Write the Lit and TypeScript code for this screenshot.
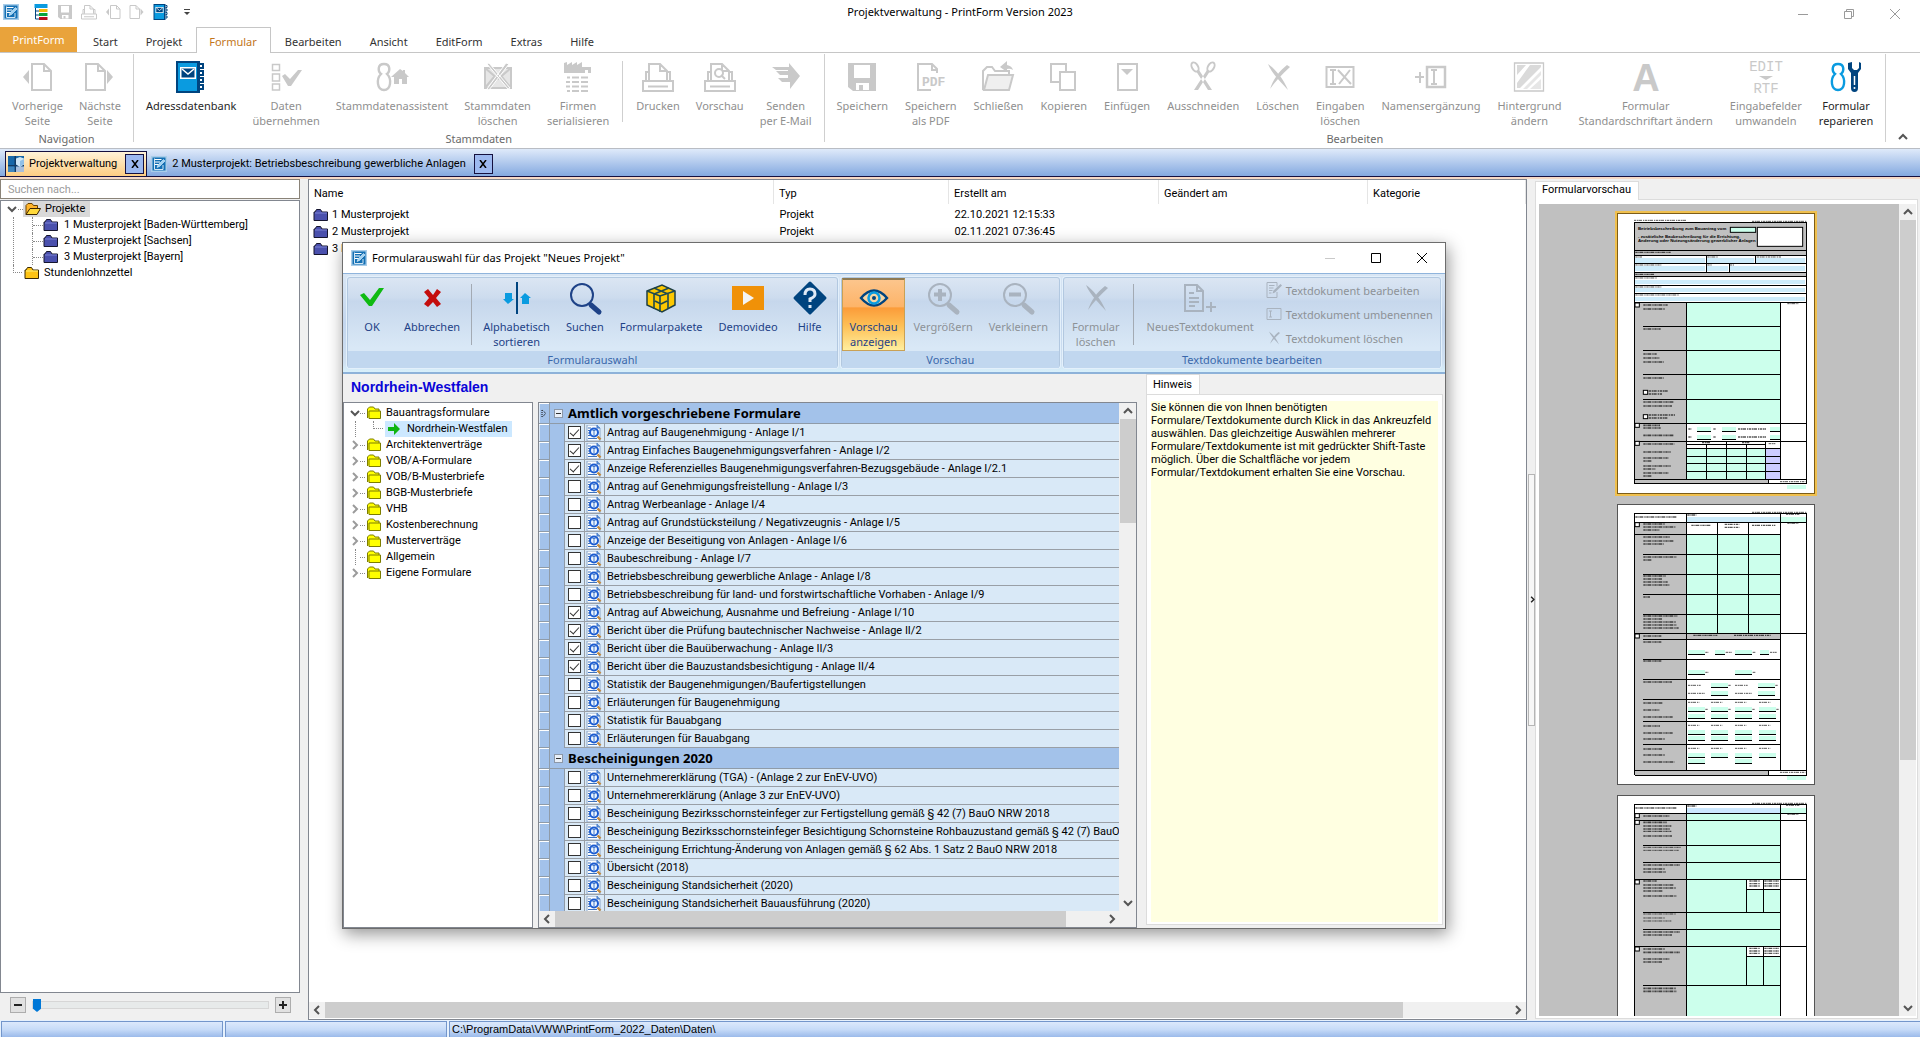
import { LitElement, html, svg, css, nothing } from "lit";
import { customElement, state } from "lit/decorators.js";
import { classMap } from "lit/directives/class-map.js";

/* ---------- icons: 32 unit ribbon glyphs ---------- */
const G = "#c9c9c9";
const page = (x: number) => svg`<path d="M${x} 3h12l7 7v19h-19zM${x + 12} 3v7h7" fill="none" stroke="currentColor" stroke-width="2"/>`;
const cross = svg`<path d="M6 3c7 5 15 14 20 26C20 22 10 13 6 3zM25 4l3 2C20 13 13 21 8 28c3-9 9-18 17-24z" fill="currentColor"/>`;
const man = (x: number, c: string) => svg`<path d="M${x} 3c-7 0-6 8-3 10c-5 5-4 16 3 16s8-11 3-16c3-2 4-10-3-10z" fill="none" stroke="${c}" stroke-width="2.4"/>`;
const loupe = (inner: unknown) => svg`<circle cx="13" cy="13" r="11" fill="none" stroke="currentColor" stroke-width="2"/>${inner}<path d="M22 23l8 7" stroke="currentColor" stroke-width="5" stroke-linecap="round"/>`;
const printer = svg`<path d="M1 20h30v10h-30zM6 25.500h20M4 20v-9h3v8M28 20v-9h-3v8M7 19v-16h11l7 7v9M18 3v7h7" fill="none" stroke="currentColor" stroke-width="2"/>`;
const book = svg`<path d="M1 0h24v32h-24z" fill="#00447f"/><path d="M3 2h19v28h-19z" fill="#0a9be0"/><path d="M5 6h16v12h-16z" fill="#fff"/><path d="M6.500 7.500h13v9h-13z" fill="#00447f"/><path d="M7 8l6 5 6-5" fill="none" stroke="#fff" stroke-width="1.500"/><path d="M25 3h3v4h-3M25 10h3v4h-3M25 17h3v4h-3M25 24h3v4h-3" fill="none" stroke="#00447f" stroke-width="2"/>`;
const docIcon = svg`<path d="M0 0h32v32H0z" fill="#1470b4"/><path d="M1.500 1.500h29v29h-29z" fill="none" stroke="#a9cde9" stroke-width="3"/><path d="M8 7h13M8 12h10M8 17h7" stroke="#fff" stroke-width="2"/><path d="M7 5v22h17v-9" fill="none" stroke="#d4e7f5" stroke-width="2"/><path d="M12 23l2-5L25 7l3 3-11 11z" fill="#9fd3f5" stroke="#fff"/>`;

const ICONS: Record<string, unknown> = {
  prev: svg`<path d="M8 9v14l-6-7z" fill="currentColor"/>${page(11)}`,
  next: svg`<path d="M23 9v14l6-7z" fill="currentColor"/>${page(2)}`,
  book, doc: docIcon, printer,
  daten: svg`<path d="M2.500 3.500h7v6h-7zM2.500 13h7v7h-7zM2.500 23h7v6h-7z" fill="none" stroke="currentColor" stroke-width="1.500"/><path d="M12 15l3-2 5 5 8-9h4L21 25h-3z" fill="currentColor"/>`,
  assist: svg`${man(8, G)}<path d="M15 16l9-8 3 2v-1h2v3l4 4h-2v7h-5v-5h-3v5h-5v-7z" fill="currentColor"/>`,
  stammdel: svg`<path d="M3 7h26v20h-26z" fill="#e6e6e6" stroke="currentColor" stroke-width="2"/><path d="M3 7l13 11L29 7M3 27l9-11M29 27l-9-11" fill="none" stroke="currentColor" stroke-width="2"/><path d="M5 3l2-1 21 25-2 1zM24 2l3 1L7 29l-2-1z" fill="${G}" stroke="#fff"/>`,
  firmen: svg`<path d="M2 12V2l3-1v3l5-3v3l5-3v3l5-3v5h9v6h-3v-3h-3v3z" fill="currentColor"/><path d="M5 16.500h3M10 16.500h7M19 16.500h7M4 21h4M10 21h7M19 21h7M4 25.500h4M10 25.500h7M19 25.500h7M5 30h3M10 30h7M19 30h7" stroke="currentColor" stroke-width="2"/>`,
  preview: svg`${printer}<circle cx="15" cy="12" r="4" fill="#fff" stroke="currentColor" stroke-width="2"/><path d="M17 14l4 4" stroke="currentColor" stroke-width="2"/>`,
  send: svg`<path d="M2 6h17V2l11 13-10 13v-7h-8l-4-4h10v-3h-8l-4-4h12v-1H6z" fill="currentColor"/>`,
  save: svg`<path d="M2 2h28v28H7l-5-4z" fill="currentColor"/><path d="M8 4h16v13H8z" fill="#fff"/><path d="M10 22h13v7H10z" fill="#fff"/><path d="M13 24h4v5h-4z" fill="currentColor"/>`,
  pdf: svg`<path d="M22 9v-1l-5-5H3v26h13M17 3v6h5v3" fill="none" stroke="currentColor" stroke-width="2"/><text x="7" y="25" font-family="Liberation Mono" font-weight="700" font-size="13" fill="currentColor">PDF</text>`,
  close: svg`<path d="M1 29V10l4-4h5l3 4h14v4" fill="none" stroke="currentColor" stroke-width="2"/><path d="M6 14h25l-4 15H2z" fill="#efefef" stroke="currentColor" stroke-width="2"/><path d="M18 6l7-6v4q5 1 6 5-3-2-6-1v3z" fill="currentColor"/>`,
  copy: svg`<path d="M3 3h15v18H3z" fill="none" stroke="currentColor" stroke-width="2"/><path d="M12 11h15v18H12z" fill="#fff" stroke="currentColor" stroke-width="2"/>`,
  paste: svg`<path d="M7 3h19v26H7z" fill="none" stroke="currentColor" stroke-width="2"/><path d="M10 8h12l-6 6z" fill="currentColor"/>`,
  cut: svg`<ellipse cx="8" cy="6" rx="3" ry="5" transform="rotate(-30 8 6)" fill="none" stroke="currentColor" stroke-width="2"/><ellipse cx="24" cy="6" rx="3" ry="5" transform="rotate(30 24 6)" fill="none" stroke="currentColor" stroke-width="2"/><path d="M9 10l3-1 13 20h-4zM23 10l-3-1L7 29h4z" fill="currentColor"/>`,
  cross,
  eingaben: svg`<path d="M2.500 6h27v20h-27z" fill="none" stroke="currentColor" stroke-width="2"/><path d="M6 9h6M9 9v14M6 23h6" stroke="currentColor" stroke-width="2"/><path d="M14 9l13 14M26 9L15 23" stroke="currentColor" stroke-width="2"/>`,
  namen: svg`<path d="M0 16h9M5 11v11" stroke="currentColor" stroke-width="2"/><path d="M12 6h18v20H12z" fill="none" stroke="currentColor" stroke-width="2.500"/><path d="M16 9h6M19 9v14M16 23h6" stroke="currentColor" stroke-width="2"/>`,
  hinter: svg`<path d="M1.500 2h29v28h-29z" fill="none" stroke="currentColor" stroke-width="1.300"/><path d="M4 4h9L4 14zM17 4h11v2L7 27H4v-5z" fill="#dadada"/><path d="M28 10v4L14 28h-4zM28 18v10h-11z" fill="#e6e6e6"/>`,
  fontA: svg`<text x="16" y="30" text-anchor="middle" font-family="Liberation Sans" font-weight="700" font-size="38" fill="currentColor">A</text>`,
  editrtf: svg`<text x="16" y="10" text-anchor="middle" font-family="Liberation Mono" font-size="14" fill="currentColor">EDIT</text><path d="M9 15h14l-7 4z" fill="currentColor"/><text x="16" y="32" text-anchor="middle" font-family="Liberation Mono" font-size="14" fill="currentColor">RTF</text>`,
  repair: svg`${man(8, "#0a9be0")}<path d="M18 2v6l3 4v15q0 4 3.500 4t3.500-4V12l3-4V2l-2-1v6l-2 2h-3l-2-2V1z" fill="#00447f"/><path d="M24.500 15v9" stroke="#fff" stroke-width="1.500"/><circle cx="24.500" cy="27" r="1" fill="#fff"/>`,
  ok: svg`<path d="M4 13l4-2 6 7 9-12h5L16 24h-3z" fill="#0fba12"/>`,
  cancel: svg`<path d="M8 10l4-3 5 6 4-6 4 3-5 6 5 6-4 3-4-5-5 5-4-3 5-6z" fill="#c40d0d"/>`,
  sort: svg`<path d="M16 0v32" stroke="#00447f" stroke-width="2"/><path d="M4 11h7v6h2l-6 5-5-5h2z" fill="#0a9be0"/><path d="M21 22h7v-6h2l-6-5-5 5h2z" fill="#0a9be0"/>`,
  search: loupe(nothing),
  zoomin: loupe(svg`<path d="M7 12.500h12M13 7v12" stroke="currentColor" stroke-width="4"/>`),
  zoomout: loupe(svg`<path d="M7 12.500h12" stroke="currentColor" stroke-width="4"/>`),
  box: svg`<path d="M2 9l15-6 13 6v14l-13 7-15-7z" fill="#fdc800" stroke="#1f3f44" stroke-width="1.500"/><path d="M2 9l13 5 15-5M15 14v16M9 6l14 6v15M24 6l-15 6v15M10 19l6 3M22 19l-6 3" fill="none" stroke="#1f4a50" stroke-width="1.600"/>`,
  video: svg`<path d="M0 4h32v24H0z" fill="#f09108"/><path d="M11 9l11 7-11 7z" fill="#f4f4f4"/>`,
  help: svg`<path d="M16 1L31 16 16 31 1 16z" fill="#00447f" stroke="#00447f" stroke-width="3" stroke-linejoin="round"/><path d="M11 13q0-6 5-6t5 5q0 3-5 5v3" fill="none" stroke="#dfe9f5" stroke-width="3"/><path d="M14.500 23h3v3h-3z" fill="#dfe9f5"/>`,
  eye: svg`<path d="M3 16q13-15 26 0q-13 15-26 0z" fill="#f7d6a5" stroke="#00447f" stroke-width="2.400"/><circle cx="16" cy="16" r="5.500" fill="none" stroke="#0a9be0" stroke-width="2.500"/><circle cx="16" cy="16" r="2" fill="#00447f"/>`,
  neudoc: svg`<path d="M1 3h12l6 6v20H1zM13 3v6h6M5 11h5M5 16h10M5 20h10M5 24h6" fill="none" stroke="currentColor" stroke-width="2"/><path d="M22 25h10M27 20v10" stroke="currentColor" stroke-width="2"/>`,
  tedit: svg`<path d="M2 1h20v8M22 20v11H2V1M6 7h11M6 12h9M6 17h7M6 22h5" fill="none" stroke="currentColor" stroke-width="2"/><path d="M13 23l2-6L29 4l3 3-14 14z" fill="currentColor"/>`,
  trename: svg`<path d="M2 5h28v22H2z" fill="none" stroke="currentColor" stroke-width="2"/><path d="M6 10h6M9 10v12M6 22h6" stroke="currentColor" stroke-width="2"/>`,
  list: svg`<path d="M3 0h26v8H3z" fill="#0a9be0"/><path d="M5 8v22M5 14h8M5 22h8M5 30h8" stroke="#00447f" stroke-width="2" fill="none"/><path d="M12 10h17v6H12z" fill="#f2b90c"/><path d="M12 18h17v6H12z" fill="#0aa43c"/><path d="M12 26h17v6H12z" fill="#b80f1c"/>`,
  projekt: svg`<path d="M0 0h32v32H0z" fill="#1767a8"/><path d="M13 0h3v32h-3zM0 18h32v3H0z" fill="#123a63"/><path d="M0 21h13v11H0z" fill="#3e86bf"/><path d="M16 21h16v11H16z" fill="#a9bfdc"/><path d="M16 5l8-3 8 3v12l-8 5-8-5z" fill="#cfe6f6"/><path d="M24 10l8-4v10l-8 5z" fill="#8fbfe6"/>`,
};
const icon = (n: string, cls = "i32") => html`<svg class=${cls} viewBox="0 0 32 32" aria-hidden="true">${ICONS[n]}</svg>`;

const FOLDERS: Record<string, [string, string, string]> = {
  blue: ["#4a50ad", "#7c83d6", "#15152e"],
  yellow: ["#ffc414", "#fff27a", "#3b2a05"],
  lemon: ["#ffff00", "#ffff00", "#7d7d00"],
};
const folder = (k: string) => {
  const [a, b, s] = FOLDERS[k];
  return html`<svg class="fold" viewBox="0 0 16 14" aria-hidden="true">${k === "lemon"
    ? svg`<path d="M1.500 12V3l2-2h4l1.500 2h4v2M3 12.500V5h11.500v7.500z" fill="${a}" stroke="${s}"/>`
    : svg`<path d="M1 12.500V4h1l1.500-2.500h4L9 4h5.500v8.500z" fill="${a}" stroke="${s}"/><path d="M2 5h12" stroke="${b}"/>`}</svg>`;
};
const openFolder = html`<svg class="fold" viewBox="0 0 16 14" aria-hidden="true"><path d="M1 12.500V3.500L3 1.500h4L8.500 3.500h4V6" fill="#ffb52b" stroke="#6b4300"/><path d="M1 12.500L5 6.500h10.500l-3.500 6z" fill="#ffd93b" stroke="#3b2500"/></svg>`;
const CHEV: Record<string, string> = { d: "M1 3l4 4 4-4", u: "M1 7l4-4 4 4", l: "M7 1L3 5l4 4", r: "M3 1l4 4-4 4" };
const chev = (d: string, cls = "chev") => html`<svg class=${cls} viewBox="0 0 10 10" aria-hidden="true"><path d=${CHEV[d]} fill="none" stroke="currentColor" stroke-width="2"/></svg>`;
const rowMark = html`<svg class="mark" viewBox="0 0 6 9" aria-hidden="true"><path d="M1 1v7l4-3.500z" fill="#a3c2ea" stroke="#111" stroke-dasharray="1 1"/></svg>`;
const magnifier = html`<svg class="mag" viewBox="0 0 16 16" aria-hidden="true"><path d="M1 0h10l3 3v13H1z" fill="#fbfdff" stroke="#8ba6c8"/><path d="M11 0v3h3" fill="#6b9be0" stroke="#3f74c4"/><path d="M2 3h3M2 5.500h2M2 8h2M2 10.500h2M2 13.500h9" stroke="#3e72bd"/><circle cx="8" cy="7.500" r="4" fill="#eaf4ff" stroke="#1c5cd0" stroke-width="2"/><path d="M8 5v5M6.500 5.500h3" stroke="#4579c8"/><path d="M11.500 11.500l3 3" stroke="#c48a3c" stroke-width="2.400"/></svg>`;

/* ---------- preview page drawing ---------- */
const MINT = "#ccffec", SKY = "#cdecfb", GREY = "#c0c0c0";
const R = (x: number, y: number, w: number, h: number, f: string) => svg`<rect x=${x} y=${y} width=${w} height=${h} fill=${f} shape-rendering="crispEdges"/>`;
const H = (a: number, b: number, ...ys: number[]) => ys.map(y => svg`<path d="M${a} ${y}H${b}" stroke="#000" stroke-width="3" shape-rendering="crispEdges"/>`);
const V = (a: number, b: number, ...xs: number[]) => xs.map(x => svg`<path d="M${x} ${a}V${b}" stroke="#000" stroke-width="3" shape-rendering="crispEdges"/>`);
const D = (x: number, y: number, w: number, k = 5) => svg`<path d="M${x} ${y}h${w}" stroke="#000" stroke-opacity=".66" stroke-width=${k} stroke-dasharray="7 2 4 1 10 3 4 2"/>`;
const Ds = (x: number, k: number, ...l: [number, number][]) => l.map(([y, w]) => D(x, y, w, k));
const Box = (x: number, y: number) => svg`<rect x=${x} y=${y} width="13" height="12" fill="#fff" stroke="#000" stroke-width="3"/>`;
const Field = (x: number, y: number, w: number) => [R(x, y, w, 13, MINT), H(x, x + w, y + 14)];
const T = (x: number, y: number, s: string) => svg`<text x=${x} y=${y} font-family="Liberation Sans" font-weight="700" font-size="13">${s}</text>`;

const PAGE1 = svg`<g transform="translate(-37 -43) scale(.33333)">
 ${R(164, 157, 516, 98, GREY)}${R(164, 308, 516, 12, GREY)}${R(164, 398, 156, 545, GREY)}${R(164, 928, 400, 14, GREY)}
 ${D(162, 151, 156, 3)}${D(516, 154, 164, 3)}
 ${T(174, 180, "Betriebsbeschreibung zum Bauantrag vom")}
 ${T(174, 204, "- zusätzliche Baubeschreibung für die Errichtung,")}
 ${T(174, 217, "Änderung oder Nutzungsänderung gewerblicher Anlagen")}
 <rect x="451" y="172" width="76" height="15" fill=${MINT} stroke="#000" stroke-width="3"/><rect x="532" y="172" width="136" height="57" fill="#fff" stroke="#000" stroke-width="3"/>
 ${D(166, 247, 108, 4)}${D(166, 313, 56, 4)}
 ${[[166, 208], [382, 140], [528, 148]].map(([x, w]) => R(x, 264, w, 14, SKY))}
 ${[[166, 208], [382, 62], [450, 226]].map(([x, w]) => R(x, 288, w, 14, SKY))}
 ${[330, 354, 380].map(y => R(166, y, 510, 13, SKY))}
 ${D(166, 261, 20, 3)}${D(382, 261, 32, 3)}${D(530, 261, 74, 3)}${D(166, 285, 78, 3)}${D(382, 285, 14, 3)}${D(450, 285, 12, 3)}
 ${D(166, 324, 66, 3)}${D(166, 351, 78, 3)}${D(166, 375, 130, 3)}
 ${H(164, 680, 157, 242, 256, 280, 308, 320, 346, 371, 398)}
 ${V(256, 280, 380, 527)}${V(280, 308, 380, 448)}
 ${R(320, 398, 281, 362, MINT)}${H(189, 601, 469, 541, 613, 688)}${H(164, 601, 760)}
 ${H(164, 680, 760, 814)}
 ${Ds(190, 5, [405, 74], [417, 66], [477, 52], [552, 42], [564, 48], [576, 62], [624, 62], [696, 92], [708, 86], [766, 50], [774, 52], [796, 92], [822, 94], [846, 82], [864, 76], [873, 26], [888, 82], [897, 36], [909, 76], [918, 26])}
 ${Box(190, 661)}${Box(190, 734)}${Ds(206, 5, [663, 60], [672, 40], [735, 80], [744, 56])}
 ${Box(165, 399)}${Box(165, 760)}${Box(165, 814)}${D(622, 401, 34, 3)}
 ${[770, 794].map(y => [D(325, y + 7, 10, 4), Field(351, y, 42), D(400, y + 7, 8, 4), Field(426, y, 42), D(474, y + 7, 84, 4), Field(570, y, 30)])}
 ${R(320, 835, 237, 92, MINT)}${R(557, 835, 44, 92, "#ccccff")}
 ${D(366, 818, 24, 4)}${D(486, 818, 22, 4)}${D(566, 821, 20, 3)}
 ${H(320, 557, 823)}${H(320, 601, 835, 859, 880, 904)}${V(823, 928, 380, 500)}${V(814, 928, 440, 557)}
 ${H(164, 680, 928, 942)}${R(566, 931, 112, 9, "#fff")}${V(928, 942, 565)}${D(600, 935, 76, 3)}${R(621, 946, 57, 11, MINT)}
 ${V(157, 943, 164, 680)}${V(398, 928, 320, 601)}</g>`;

const PAGE2 = svg`<g transform="translate(-37 -14) scale(.33333)">
 ${D(516, 67, 164, 3)}${R(164, 97, 156, 744, GREY)}${R(320, 431, 281, 16, GREY)}${R(321, 81, 280, 14, SKY)}${R(603, 81, 74, 14, MINT)}${R(164, 843, 400, 13, GREY)}
 ${D(166, 81, 126, 5)}${D(322, 75, 28, 5)}${D(618, 73, 42, 3)}${D(622, 100, 34, 3)}
 ${R(320, 133, 281, 297, MINT)}
 ${H(164, 680, 70, 97, 430)}${H(164, 601, 133)}${H(189, 601, 193, 253, 313, 373)}${V(97, 430, 413, 506)}
 ${D(334, 106, 58, 4)}${D(434, 103, 44, 4)}${D(434, 112, 44, 4)}${D(516, 106, 70, 4)}
 ${Ds(190, 5, [102, 66], [111, 96], [120, 48], [141, 80], [153, 90], [162, 62], [201, 100], [210, 26], [258, 68], [321, 20], [378, 102], [387, 56], [438, 54], [456, 54], [513, 54], [576, 86], [639, 60], [660, 48], [681, 88], [708, 50], [729, 88], [747, 64], [777, 56], [795, 64], [816, 94])}
 ${Ds(190, 4, [267, 56], [276, 74], [285, 78], [396, 98], [405, 100], [414, 108])}
 ${D(340, 436, 72, 4)}${D(462, 436, 110, 4)}
 ${H(189, 601, 448, 508, 568, 628, 694, 763)}
 ${Field(324, 481, 51)}${Field(405, 481, 30)}${Field(465, 481, 51)}${Field(540, 481, 27)}${Field(324, 541, 51)}${Field(465, 541, 51)}
 ${D(376, 487, 10, 3)}${D(437, 487, 18, 3)}${D(518, 487, 10, 3)}${D(570, 487, 20, 3)}${D(376, 547, 10, 3)}${D(518, 547, 10, 3)}
 ${[324, 465].map(x => [D(x, 586, 38, 3), D(x, 610, 50, 3), Field(x + 70, 579, 51), Field(x + 70, 603, 51), D(x + 121, 586, 8, 3)])}
 ${[324, 393, 465, 537].map(x => [[637, 706, 775].map(y => D(x, y, 34, 3)), [652, 671, 721, 739].map(y => Field(x, y, 51)), Field(x, 788, 51), D(x + 52, 658, 8, 3)])}
 ${Field(324, 808, 51)}${Field(465, 808, 51)}
 ${Box(165, 98)}${Box(165, 432)}
 ${H(164, 680, 841, 856)}${R(566, 844, 112, 10, "#fff")}${V(843, 856, 565)}${D(600, 847, 76, 3)}${R(621, 858, 57, 11, MINT)}
 ${V(70, 856, 164, 680)}${V(70, 841, 320, 601)}</g>`;

const PAGE3 = svg`<g transform="translate(-117 -15) scale(.33333)">
 ${D(756, 70, 164, 3)}${R(404, 100, 156, 760, GREY)}${R(561, 84, 280, 15, "#cce8ff")}${R(844, 84, 74, 14, MINT)}${R(560, 101, 281, 760, MINT)}
 ${D(406, 84, 126, 5)}${D(562, 78, 28, 5)}${D(858, 76, 42, 3)}${D(862, 103, 34, 3)}
 ${H(404, 920, 73, 100, 121, 298, 499)}${H(429, 841, 196, 247, 397, 448, 616)}
 ${R(741, 300, 99, 27, "#fff")}${R(741, 501, 99, 27, "#fff")}${V(298, 397, 740, 790)}${V(499, 616, 740, 790)}${H(740, 841, 328, 529)}
 ${[303, 505].map(y => [0, 8, 15].map(k => [D(748, y + k, 32, 4), D(793, y + k, 44, 4)]))}
 ${Ds(430, 5, [108, 78], [127, 70], [168, 86], [255, 110], [267, 64], [276, 68], [303, 40], [348, 100], [456, 110], [465, 86], [507, 64], [517, 110], [537, 78], [546, 56], [625, 98], [634, 100])}
 ${Ds(430, 4, [138, 84], [147, 80], [154, 84], [315, 92], [324, 98], [333, 60])}
 ${Ds(430, 3, [202, 112], [211, 106], [402, 98], [414, 66], [423, 84])}
 ${Box(405, 101)}${Box(405, 121)}${Box(405, 300)}${Box(405, 501)}
 ${V(73, 860, 404, 920)}${V(73, 860, 560, 841)}</g>`;

/* ---------- data ---------- */
type Btn = [string, string, boolean?];
const NAV: Btn[] = [["prev", "Vorherige\nSeite"], ["next", "Nächste\nSeite"]];
const STAMM: Btn[] = [["book", "Adressdatenbank", true], ["daten", "Daten\nübernehmen"], ["assist", "Stammdatenassistent"], ["stammdel", "Stammdaten\nlöschen"], ["firmen", "Firmen\nserialisieren"]];
const DRUCK: Btn[] = [["printer", "Drucken"], ["preview", "Vorschau"], ["send", "Senden\nper E-Mail"]];
const BEARB: Btn[] = [["save", "Speichern"], ["pdf", "Speichern\nals PDF"], ["close", "Schließen"], ["copy", "Kopieren"], ["paste", "Einfügen"], ["cut", "Ausschneiden"], ["cross", "Löschen"], ["eingaben", "Eingaben\nlöschen"], ["namen", "Namensergänzung"], ["hinter", "Hintergrund\nändern"], ["fontA", "Formular\nStandardschriftart ändern"], ["editrtf", "Eingabefelder\numwandeln"], ["repair", "Formular\nreparieren", true]];

const FORMS: { title: string; rows: [string, boolean][] }[] = [
  { title: "Amtlich vorgeschriebene Formulare", rows: [
    ["Antrag auf Baugenehmigung - Anlage I/1", true], ["Antrag Einfaches Baugenehmigungsverfahren - Anlage I/2", true], ["Anzeige Referenzielles Baugenehmigungsverfahren-Bezugsgebäude - Anlage I/2.1", true],
    ["Antrag auf Genehmigungsfreistellung - Anlage I/3", false], ["Antrag Werbeanlage - Anlage I/4", false], ["Antrag auf Grundstücksteilung / Negativzeugnis - Anlage I/5", false],
    ["Anzeige der Beseitigung von Anlagen - Anlage I/6", false], ["Baubeschreibung - Anlage I/7", false], ["Betriebsbeschreibung gewerbliche Anlage - Anlage I/8", false],
    ["Betriebsbeschreibung für land- und forstwirtschaftliche Vorhaben - Anlage I/9", false], ["Antrag auf Abweichung, Ausnahme und Befreiung - Anlage I/10", true],
    ["Bericht über die Prüfung bautechnischer Nachweise - Anlage II/2", true], ["Bericht über die Bauüberwachung - Anlage II/3", true], ["Bericht über die Bauzustandsbesichtigung - Anlage II/4", true],
    ["Statistik der Baugenehmigungen/Baufertigstellungen", false], ["Erläuterungen für Baugenehmigung", false], ["Statistik für Bauabgang", false], ["Erläuterungen für Bauabgang", false]] },
  { title: "Bescheinigungen 2020", rows: [
    ["Unternehmererklärung (TGA) - (Anlage 2 zur EnEV-UVO)", false], ["Unternehmererklärung (Anlage 3 zur EnEV-UVO)", false], ["Bescheinigung Bezirksschornsteinfeger zur Fertigstellung gemäß § 42 (7) BauO NRW 2018", false],
    ["Bescheinigung Bezirksschornsteinfeger Besichtigung Schornsteine Rohbauzustand gemäß § 42 (7) BauO NRW 2018", false], ["Bescheinigung Errichtung-Änderung von Anlagen gemäß § 62 Abs. 1 Satz 2 BauO NRW 2018", false],
    ["Übersicht (2018)", false], ["Bescheinigung Standsicherheit (2020)", false], ["Bescheinigung Standsicherheit Bauausführung (2020)", false]] },
];
const CATS: [string, string][] = [["r", "Architektenverträge"], ["r", "VOB/A-Formulare"], ["r", "VOB/B-Musterbriefe"], ["r", "BGB-Musterbriefe"], ["r", "VHB"], ["r", "Kostenberechnung"], ["r", "Musterverträge"], ["", "Allgemein"], ["r", "Eigene Formulare"]];

const base = css`
  * { box-sizing: border-box; }
  button { font: inherit; color: inherit; background: none; border: 0; padding: 0; margin: 0; cursor: default; }
  ul { list-style: none; margin: 0; padding: 0; }
  svg { display: block; flex: none; }
  .i32 { width: 32px; height: 32px; overflow: visible; }
  .i16 { width: 16px; height: 16px; overflow: visible; }
  .fold { width: 16px; height: 14px; }
  .chev { width: 10px; height: 10px; color: #555; }
  .row { display: flex; align-items: center; height: 16px; }
  .row .chev { width: 10px; }
  .slot { width: 10px; height: 16px; flex: none; }
  .dash { width: 5px; flex: none; border-top: 1px dotted #888; }
  .sb { background: #f0f0f0; display: flex; align-items: center; flex: none; }
  .sb .arr { width: 16px; height: 16px; display: grid; place-items: center; flex: none; }
  .sb.v { flex-direction: column; width: 17px; }
  .sb.h { height: 16px; }
  .thumb { background: #cdcdcd; }
  .sb.v .thumb { width: 16px; }
  .sb.h .thumb { height: 16px; }
`;

/* ---------- dialog ---------- */
@customElement("form-dialog")
export class FormDialog extends LitElement {
  @state() private preview = true;
  static styles = [base, css`
    :host { display: flex; flex-direction: column; background: #f0f0f0; border: 1px solid #6d6d6d; box-shadow: 2px 5px 16px rgba(0,0,0,.42); font: 11px/16px Roboto, "Liberation Sans", sans-serif; color: #000; }
    .ui { font-family: "Noto Sans", "Open Sans", sans-serif; }
    .title { display: flex; align-items: center; height: 30px; background: #fff; padding-left: 8px; gap: 5px; flex: none; font-size: 11px; }
    .title h1 { font: inherit; margin: 0; flex: 1; }
    .wc { display: flex; }
    .wc button { width: 46px; height: 30px; display: grid; place-items: center; }
    .wc svg { width: 12px; height: 12px; }
    .wc .off { color: #c9c9c9; }
    .ribbon { display: flex; gap: 3px; height: 101px; flex: none; padding: 3px 4px 4px; background: linear-gradient(#d9e6f4, #c3d6ee 50%, #cfe0f1 90%, #d8f0fb); border-top: 1px solid #8fb4dc; border-bottom: 2px solid #8db2d9; font-size: 11px; line-height: 15px; color: #1e4287; }
    .grp { display: flex; flex-direction: column; border: 1px solid #b2c8e0; border-radius: 3px; background: linear-gradient(#dbe6f3, #cddcee 22%, #c6d7ec 26%, #d9e8f6 78%); box-shadow: 0 0 0 1px #e3f0fb; }
    .grp .items { display: flex; flex: 1; padding: 0 3px 0 0; }
    .grp .cap { height: 18px; line-height: 17px; text-align: center; background: #c1d7ef; color: #3a68ab; }
    .b { display: flex; flex-direction: column; align-items: center; gap: 5px; padding: 4px 8px 0; min-width: 40px; white-space: pre; line-height: 15px; height: 73px; }
    .b:disabled, .s:disabled { color: #8d9297; }
    .b:disabled svg, .s:disabled svg { color: #a9b3bf; }
    .b.on { background: linear-gradient(#fcc58c, #fdb469 38%, #fb9c3a 40%, #fdbf55 65%, #ffee9e); border: 1px solid #c9a155; border-top: 2px solid #8f7a52; padding: 2px 7px 0; }
    .sep { width: 1px; background: #a3aab3; margin: 6px 3px; flex: none; height: 61px; }
    .last .sep { margin: 6px 5px; }
    .stack { display: flex; flex-direction: column; }
    .s { display: flex; align-items: center; gap: 4px; height: 24px; padding: 0 4px; white-space: nowrap; }
    .last { flex: 1; }
    .body { display: flex; flex: 1; min-height: 0; }
    .left { display: flex; flex-direction: column; flex: 1; min-width: 0; }
    h2 { font: bold 14px/26px "Liberation Sans", Arial, sans-serif; color: #0a05d8; margin: 0; padding: 0 0 0 8px; height: 28px; }
    .panes { display: flex; gap: 5px; flex: 1; min-height: 0; }
    .tree { width: 190px; background: #fff; border: 1px solid #828790; padding: 2px 0 0 6px; flex: none; }
    .tree .fold { margin-right: 4px; }
    .tree .dash { margin: 0 1px 0 0; }
    .sub { display: flex; height: 16px; margin-left: 5px; border-left: 1px dotted #888; padding-left: 17px; align-items: center; }
    .sub .elbow { width: 10px; height: 8px; border-left: 1px dotted #888; border-bottom: 1px dotted #888; align-self: flex-start; }
    .sub .hit { display: flex; align-items: center; background: #cce8ff; padding: 0 5px 0 3px; margin-left: 2px; gap: 7px; height: 16px; }
    .tree .slot { width: 5px; margin-left: 5px; border-left: 1px dotted #888; }
    .pale { color: #9b9b9b; }
    .grid { flex: 1; min-width: 0; border: 1px solid #828790; display: flex; flex-direction: column; background: #f0f0f0; }
    .gmain { display: flex; flex: 1; min-height: 0; }
    .clip { flex: 1; overflow: hidden; background: #d9e9f7; }
    table { border-collapse: separate; border-spacing: 0; table-layout: fixed; width: 100%; }
    td, th { padding: 0; overflow: hidden; white-space: nowrap; text-align: left; font-weight: 400; }
    .gh { height: 21px; }
    .gh th { background: #a3c2ea; border-bottom: 1px solid #8f9ba8; font: bold 13px/19px "Noto Sans", "Open Sans", sans-serif; }
    .gh .ghc { display: flex; align-items: center; gap: 5px; padding-left: 4px; height: 20px; }
    .pm { width: 9px; height: 9px; background: #e9f0f9; border: 1px solid #8d98a8; display: grid; place-items: center; }
    .pm::after { content: ""; width: 5px; height: 1px; background: #333; }
    .ind { background: #a3c2ea; border-right: 1px solid #8f9ba8; border-bottom: 1px solid #8f9ba8; box-shadow: inset 0 1px #fff, inset 1px 0 #dce9f8; }
    .gh th.ind { border-right: 1px solid #8f9ba8; }
    .mark { width: 6px; height: 9px; margin: 0 auto; }
    .gut { background: #a3c2ea; border-right: 1px solid #8f9ba8; }
    .fr { height: 18px; }
    .fr .c { background: #d9e9f7; border-bottom: 1px solid #999fa6; border-right: 1px solid #999fa6; }
    .fr .c.t { border-right: 0; padding-left: 2px; line-height: 18px; }
    .fr label { display: block; height: 17px; }
    input[type="checkbox"] { appearance: none; width: 13px; height: 13px; margin: 0 0 0 3px; border: 1px solid #333; background: #fff; display: grid; place-items: center; }
    input[type="checkbox"]:checked::after { content: ""; width: 4px; height: 8px; margin-top: -2px; border: solid #333; border-width: 0 1px 1px 0; transform: rotate(42deg); }
    .mag { width: 16px; height: 16px; margin-left: 1px; }
    .pb { display: block; }
    .gmain .thumb { height: 104px; }
    .grow { flex: 1; }
    .gh2 { width: calc(100% - 86px); }
    .hint { width: 297px; margin: 0 2px 0 9px; display: flex; flex-direction: column; flex: none; padding-bottom: 3px; }
    .tab { align-self: flex-start; background: #fff; border: 1px solid #dcdcdc; border-bottom: 0; padding: 0 7px 0 6px; height: 21px; line-height: 20px; margin-bottom: -1px; }
    .card { flex: 1; background: #fff; border: 1px solid #dcdcdc; padding: 6px 4px 2px; display: flex; }
    .card p { margin: 0; flex: 1; background: #ffffe1; line-height: 13px; }
  `];
  private btn([n, t, on]: Btn) {
    return html`<button class="b" ?disabled=${on === false}>${icon(n)}<span>${t}</span></button>`;
  }
  render() {
    const top: Btn[] = [["sort", "Alphabetisch\nsortieren"], ["search", "Suchen"], ["box", "Formularpakete"], ["video", "Demovideo"], ["help", "Hilfe"]];
    const small: [string, string][] = [["tedit", "Textdokument bearbeiten"], ["trename", "Textdokument umbenennen"], ["cross", "Textdokument löschen"]];
    return html`
      <header class="title ui">${icon("doc", "i16")}<h1>Formularauswahl für das Projekt "Neues Projekt"</h1>
        <div class="wc">
          <button class="off" aria-label="Minimieren"><svg viewBox="0 0 12 12"><path d="M1 6.500h10" stroke="currentColor"/></svg></button>
          <button aria-label="Maximieren"><svg viewBox="0 0 12 12"><path d="M1.500 1.500h9v9h-9z" fill="none" stroke="#000"/></svg></button>
          <button aria-label="Schließen"><svg viewBox="0 0 12 12"><path d="M1 1l10 10M11 1L1 11" stroke="#000"/></svg></button>
        </div></header>
      <div class="ribbon ui">
        <section class="grp"><div class="items">${this.btn(["ok", "OK"])}${this.btn(["cancel", "Abbrechen"])}<i class="sep"></i>${top.map(b => this.btn(b))}</div><div class="cap">Formularauswahl</div></section>
        <section class="grp"><div class="items">
          <button class=${classMap({ b: true, on: this.preview })} aria-pressed=${this.preview} @click=${() => (this.preview = !this.preview)}>${icon("eye")}<span>${"Vorschau\nanzeigen"}</span></button>
          ${this.btn(["zoomin", "Vergrößern", false])}${this.btn(["zoomout", "Verkleinern", false])}</div><div class="cap">Vorschau</div></section>
        <section class="grp last"><div class="items">${this.btn(["cross", "Formular\nlöschen", false])}<i class="sep"></i>${this.btn(["neudoc", "NeuesTextdokument", false])}
          <div class="stack">${small.map(([n, t]) => html`<button class="s" disabled>${icon(n, "i16")}<span>${t}</span></button>`)}</div></div><div class="cap">Textdokumente bearbeiten</div></section>
      </div>
      <div class="body">
        <div class="left"><h2>Nordrhein-Westfalen</h2>
          <div class="panes">
            <ul class="tree">
              <li><div class="row">${chev("d")}<i class="dash"></i>${folder("lemon")}<span>Bauantragsformulare</span></div>
                <div class="sub"><i class="elbow"></i><span class="hit"><svg width="12" height="12" viewBox="0 0 12 12"><path d="M0 4h6V0l6 6-6 6V8H0z" fill="#0fb512"/></svg>Nordrhein-Westfalen</span></div></li>
              ${CATS.map(([c, t]) => html`<li class="row">${c ? chev("r", "chev pale") : html`<i class="slot"></i>`}<i class="dash"></i>${folder("lemon")}<span>${t}</span></li>`)}
            </ul>
            <div class="grid"><div class="gmain"><div class="clip">
              <table><colgroup><col style="width:11px"><col style="width:15px"><col style="width:20px"><col style="width:20px"><col></colgroup>
              ${FORMS.map((g, i) => html`<tbody>
                <tr class="gh"><th class="ind">${i ? nothing : rowMark}</th><th colspan="4" scope="rowgroup"><div class="ghc"><i class="pm"></i>${g.title}</div></th></tr>
                ${g.rows.map(([t, c], j) => html`<tr class="fr"><td class="ind"></td><td class="gut"></td><td class="c"><input type="checkbox" id="f${i}-${j}" .checked=${c}></td>
                  <td class="c"><button class="pb" aria-label="Formularvorschau">${magnifier}</button></td><td class="c t"><label for="f${i}-${j}">${t}</label></td></tr>`)}
              </tbody>`)}</table></div>
              <div class="sb v"><span class="arr">${chev("u")}</span><i class="thumb"></i><i class="grow"></i><span class="arr">${chev("d")}</span></div></div>
              <div class="sb h"><span class="arr">${chev("l")}</span><i class="thumb gh2"></i><i class="grow"></i><span class="arr">${chev("r")}</span><i class="arr"></i></div>
            </div>
          </div></div>
        <aside class="hint"><div class="tab">Hinweis</div><div class="card"><p>Sie können die von Ihnen benötigten<br>Formulare/Textdokumente durch Klick in das Ankreuzfeld<br>auswählen. Das gleichzeitige Auswählen mehrerer<br>Formulare/Textdokumente ist mit gedrückter Shift-Taste<br>möglich. Über die Schaltfläche vor jedem<br>Formular/Textdokument erhalten Sie eine Vorschau.</p></div></aside>
      </div>`;
  }
}

/* ---------- application window ---------- */
@customElement("app-root")
export class AppRoot extends LitElement {
  static styles = [base, css`
    :host { display: flex; flex-direction: column; height: 100vh; overflow: hidden; position: relative; background: #f0f0f0; font: 11px/16px Roboto, "Liberation Sans", sans-serif; color: #000; }
    .ui { font-family: "Noto Sans", "Open Sans", sans-serif; }
    .titlebar { display: grid; grid-template-columns: 1fr auto 1fr; height: 27px; background: #fff; flex: none; }
    .quick { display: flex; align-items: center; gap: 8px; padding-left: 3px; height: 24px; color: #c9c9c9; }
    .quick button:first-child { margin-right: 6px; }
    .quick .more { margin-left: 6px; color: #444; }
    .titlebar h1 { font: inherit; line-height: 23px; margin: 0; }
    .wc { justify-self: end; display: flex; color: #9a9a9a; padding-right: 2px; }
    .wc button { width: 46px; height: 28px; display: grid; place-items: center; }
    .wc svg { width: 12px; height: 12px; }
    .tabs { display: flex; height: 26px; background: #fff; border-bottom: 1px solid #c6c6c6; flex: none; color: #333; }
    .tabs button { padding: 3px 14px 0 14px; height: 26px; line-height: 23px; }
    .tabs .file { background: #e9a33b; color: #fff; width: 77px; padding: 0; line-height: 22px; margin-right: 2px; height: 25px; }
    .tabs .cur { background: #fff; border: 1px solid #c6c6c6; border-bottom: 0; color: #c2761a; padding: 2px 13px 0 12px; }
    .ribbon { display: flex; height: 95px; background: #fff; flex: none; line-height: 15px; }
    .grp { display: flex; flex-direction: column; padding-top: 8px; }
    .items { display: flex; padding: 0 4px; }
    .wide { gap: 1px; }
    .b { display: flex; flex-direction: column; align-items: center; gap: 5px; padding: 0 8px; height: 70px; white-space: pre; line-height: 15px; color: #262626; text-align: center; }
    .b:disabled { color: #8f8f8f; }
    .b:disabled svg { color: #c9c9c9; }
    .cap { text-align: center; color: #6a6a6a; }
    .gs { width: 1px; height: 88px; margin-top: 1px; background: #cfcfcf; flex: none; }
    .is { width: 1px; height: 61px; margin: 0 5px; background: #cfcfcf; flex: none; }
    .fold-up { margin: auto 12px 6px auto; }
    .docs { display: flex; align-items: flex-end; height: 29px; border-top: 1px solid #b9bdc4; background: linear-gradient(#dfeafa, #84a9e0); border-bottom: 1px solid #15103f; flex: none; padding-left: 5px; }
    .dt { display: flex; align-items: center; height: 25px; }
    .dt.cur { background: linear-gradient(#fff3d8, #fdcd82); border: 1px solid #15103f; border-bottom: 0; padding: 0 2px; }
    .dt svg { margin-right: 5px; }
    .dt .x { width: 19px; height: 20px; margin-left: 8px; border: 1px solid #15103f; background: #9db9f0; display: grid; place-items: center; }
    .dt .x svg { width: 8px; height: 8px; margin: 0; }
    .dt + .dt { padding-left: 4px; }
    .peach { height: 2px; background: #f6d9c6; flex: none; }
    .main { display: flex; flex: 1; min-height: 0; }
    .side { width: 300px; display: flex; flex-direction: column; flex: none; }
    .side input[type="search"] { width: 100%; height: 20px; border: 1px solid #8a8378; outline: 0; font: inherit; padding: 0 7px; background: #fff; }
    .side input::placeholder { color: #9c9c9c; opacity: 1; }
    .tree { flex: 1; background: #fff; border: 1px solid #828790; margin-top: 1px; padding: 0 0 0 6px; }
    .tree .dash { margin: 0 0 0 1px; }
    .hit { display: flex; align-items: center; height: 16px; gap: 4px; padding: 0 5px 0 2px; }
    .hit.on { background: #d9d9d9; }
    .kids { margin-left: 6px; border-left: 1px dotted #888; padding-left: 18px; }
    .kids .row { gap: 5px; }
    .kids .dash { width: 10px; margin: 0 -5px 0 0; }
    .kids .in { border-left: 1px dotted #888; }
    .end { margin-left: 6px; }
    .end .elbow { width: 9px; height: 8px; border-left: 1px dotted #888; border-bottom: 1px dotted #888; align-self: flex-start; }
    .zoom { height: 27px; display: flex; align-items: center; gap: 6px; padding: 0 9px 3px 10px; }
    .zoom button { width: 16px; height: 16px; border: 1px solid #adadad; background: #e1e1e1; display: grid; place-items: center; }
    .zoom button svg { width: 8px; height: 8px; }
    .zoom input { appearance: none; flex: 1; height: 14px; margin: 0; background: none; min-width: 0; }
    .zoom input::-webkit-slider-runnable-track { height: 8px; background: #e7eaea; border: 1px solid #d6d6d6; }
    .zoom input::-webkit-slider-thumb { appearance: none; width: 8px; height: 13px; margin-top: -3px; background: #0078d7; clip-path: polygon(0 0, 100% 0, 100% 75%, 50% 100%, 0 75%); }
    .list { flex: 1; min-width: 0; margin-left: 8px; background: #fff; border: 1px solid #828790; display: flex; flex-direction: column; }
    .list table { border-collapse: collapse; table-layout: fixed; width: 100%; }
    .list th { text-align: left; font-weight: 400; height: 24px; padding: 4px 0 0 5px; border-right: 1px solid #e5e5e5; line-height: 20px; }
    .list td { height: 17px; padding: 0 0 0 6px; line-height: 17px; }
    .list tbody::before { content: ""; display: block; height: 2px; }
    .list td:first-child { padding-left: 4px; }
    .nm { display: flex; align-items: center; gap: 3px; }
    .fill { flex: 1; }
    .list .sb { margin-bottom: 1px; }
    .list .thumb { width: calc(100% - 139px); }
    .grip { width: 8px; display: grid; place-items: center; flex: none; }
    .grip button { width: 7px; height: 252px; border: 1px solid #b5b5b5; background: #f7f7f7; display: grid; place-items: center; }
    .grip svg { width: 7px; height: 7px; color: #222; }
    .right { width: 383px; margin-right: 2px; display: flex; flex-direction: column; padding-top: 2px; flex: none; }
    .ptab { align-self: flex-start; background: #fff; border: 1px solid #dcdcdc; border-bottom: 0; height: 19px; line-height: 16px; padding: 0 7px 0 6px; margin-bottom: -1px; z-index: 1; }
    .pcard { flex: 1; min-height: 0; background: #fff; border: 1px solid #dcdcdc; padding: 4px 1px 2px 3px; display: flex; margin-bottom: 1px; }
    .pages { flex: 1; background: #c0c0c0; overflow: hidden; padding: 9px 7px 0 0; display: flex; flex-direction: column; align-items: center; gap: 10px; }
    .pg { width: 198px; height: 281px; background: #fff; border: 1px solid #555; flex: none; overflow: hidden; }
    .pg.sel { box-shadow: 0 0 0 2px #f0c04e; border-color: #7d5d18; }
    .pg svg { width: 198px; height: 281px; margin: -1px; }
    .pcard .thumb { height: 540px; }
    .status { height: 17px; display: flex; gap: 2px; padding: 1px 0 0 1px; background: #e6f1fd; flex: none; font: 11px/15px "Liberation Sans", Arial, sans-serif; }
    .status span { width: 222px; border: 1px solid #7396cb; border-bottom: 0; background: linear-gradient(#dce9fc, #c6dbf8 50%, #9bbaea); padding-left: 2px; }
    .status span:last-child { flex: 1; border-right: 0; }
    form-dialog { position: absolute; left: 342px; top: 242px; width: 1104px; height: 687px; }
  `];
  private btn = ([n, t, on]: Btn) => html`<button class="b" ?disabled=${!on}>${icon(n)}<span>${t}</span></button>`;
  render() {
    const x = html`<svg viewBox="0 0 8 8" aria-hidden="true"><path d="M1 0l6 8M7 0L1 8" stroke="#000" stroke-width="1.500"/></svg>`;
    return html`
      <header class="titlebar ui">
        <div class="quick">${[["doc", "PrintForm"], ["list", "Struktur"], ["save", "Speichern"], ["printer", "Drucken"], ["prev", "Vorherige Seite"], ["next", "Nächste Seite"], ["book", "Adressdatenbank"]].map(([n, l]) => html`<button aria-label=${l}>${icon(n, "i16")}</button>`)}
          <button class="more" aria-label="Anpassen"><svg width="8" height="8" viewBox="0 0 8 8"><path d="M1 1.500h6" stroke="currentColor"/><path d="M1 4h6l-3 3z" fill="currentColor"/></svg></button></div>
        <h1>Projektverwaltung - PrintForm Version 2023</h1>
        <div class="wc">
          <button aria-label="Minimieren"><svg viewBox="0 0 12 12"><path d="M1 6.500h10" stroke="currentColor"/></svg></button>
          <button aria-label="Wiederherstellen"><svg viewBox="0 0 12 12"><path d="M1.500 3.500h7v7h-7zM3.500 3.500v-2h7v7h-2" fill="none" stroke="currentColor"/></svg></button>
          <button aria-label="Schließen"><svg viewBox="0 0 12 12"><path d="M1 1l10 10M11 1L1 11" stroke="currentColor"/></svg></button>
        </div>
      </header>
      <nav class="tabs ui"><button class="file">PrintForm</button>${["Start", "Projekt", "Formular", "Bearbeiten", "Ansicht", "EditForm", "Extras", "Hilfe"].map(t => html`<button class=${classMap({ cur: t === "Formular" })}>${t}</button>`)}</nav>
      <div class="ribbon ui">
        <section class="grp"><div class="items">${NAV.map(this.btn)}</div><div class="cap">Navigation</div></section><i class="gs"></i>
        <section class="grp"><div class="items">${STAMM.map(this.btn)}<i class="is"></i>${DRUCK.map(this.btn)}</div><div class="cap">Stammdaten</div></section><i class="gs"></i>
        <section class="grp"><div class="items wide">${BEARB.map(this.btn)}</div><div class="cap">Bearbeiten</div></section><i class="gs"></i>
        <button class="fold-up" aria-label="Menüband einklappen">${chev("u")}</button>
      </div>
      <nav class="docs">
        <div class="dt cur">${icon("projekt", "i16")}<span>Projektverwaltung</span><button class="x" aria-label="Schließen">${x}</button></div>
        <div class="dt">${icon("doc", "i16")}<span>2 Musterprojekt: Betriebsbeschreibung gewerbliche Anlagen</span><button class="x" aria-label="Schließen">${x}</button></div>
      </nav>
      <div class="peach"></div>
      <div class="main">
        <div class="side">
          <input type="search" placeholder="Suchen nach..." aria-label="Suchen nach">
          <ul class="tree">
            <li><div class="row">${chev("d")}<i class="dash"></i><span class="hit on">${openFolder}Projekte</span></div>
              <ul class="kids">${["1 Musterprojekt [Baden-Württemberg]", "2 Musterprojekt [Sachsen]", "3 Musterprojekt [Bayern]"].map(t => html`<li class="row in"><i class="dash"></i>${folder("blue")}<span>${t}</span></li>`)}</ul></li>
            <li class="row end"><i class="elbow"></i><span class="hit">${folder("yellow")}Stundenlohnzettel</span></li>
          </ul>
          <div class="zoom"><button aria-label="Verkleinern"><svg viewBox="0 0 8 8"><path d="M0 4h8" stroke="#222" stroke-width="2"/></svg></button>
            <input type="range" min="0" max="100" value="0" aria-label="Zoom"><button aria-label="Vergrößern"><svg viewBox="0 0 8 8"><path d="M0 4h8M4 0v8" stroke="#222" stroke-width="2"/></svg></button></div>
        </div>
        <div class="list">
          <table><colgroup><col><col style="width:175px"><col style="width:210px"><col style="width:209px"><col style="width:158px"></colgroup>
            <thead><tr>${["Name", "Typ", "Erstellt am", "Geändert am", "Kategorie"].map(t => html`<th scope="col">${t}</th>`)}</tr></thead>
            <tbody>${[["1 Musterprojekt", "22.10.2021 12:15:33"], ["2 Musterprojekt", "02.11.2021 07:36:45"], ["3 Musterprojekt", ""]].map(([n, d]) => html`<tr><td><span class="nm">${folder("blue")}${n}</span></td><td>Projekt</td><td>${d}</td><td></td><td></td></tr>`)}</tbody></table>
          <div class="fill"></div>
          <div class="sb h"><span class="arr">${chev("l")}</span><i class="thumb"></i><i class="fill"></i><span class="arr">${chev("r")}</span></div>
        </div>
        <div class="grip"><button aria-label="Vorschau einklappen">${chev("r")}</button></div>
        <aside class="right"><div class="ptab">Formularvorschau</div>
          <div class="pcard"><div class="pages">${[PAGE1, PAGE2, PAGE3].map((p, i) => html`<div class=${classMap({ pg: true, sel: i === 0 })}><svg viewBox="0 0 198 281" role="img" aria-label="Seite ${i + 1}">${p}</svg></div>`)}</div>
            <div class="sb v"><span class="arr">${chev("u")}</span><i class="thumb"></i><i class="fill"></i><span class="arr">${chev("d")}</span></div></div>
        </aside>
      </div>
      <footer class="status"><span></span><span></span><span>C:\\ProgramData\\VWW\\PrintForm_2022_Daten\\Daten\\</span></footer>
      <form-dialog role="dialog" aria-label="Formularauswahl"></form-dialog>`;
  }
}
